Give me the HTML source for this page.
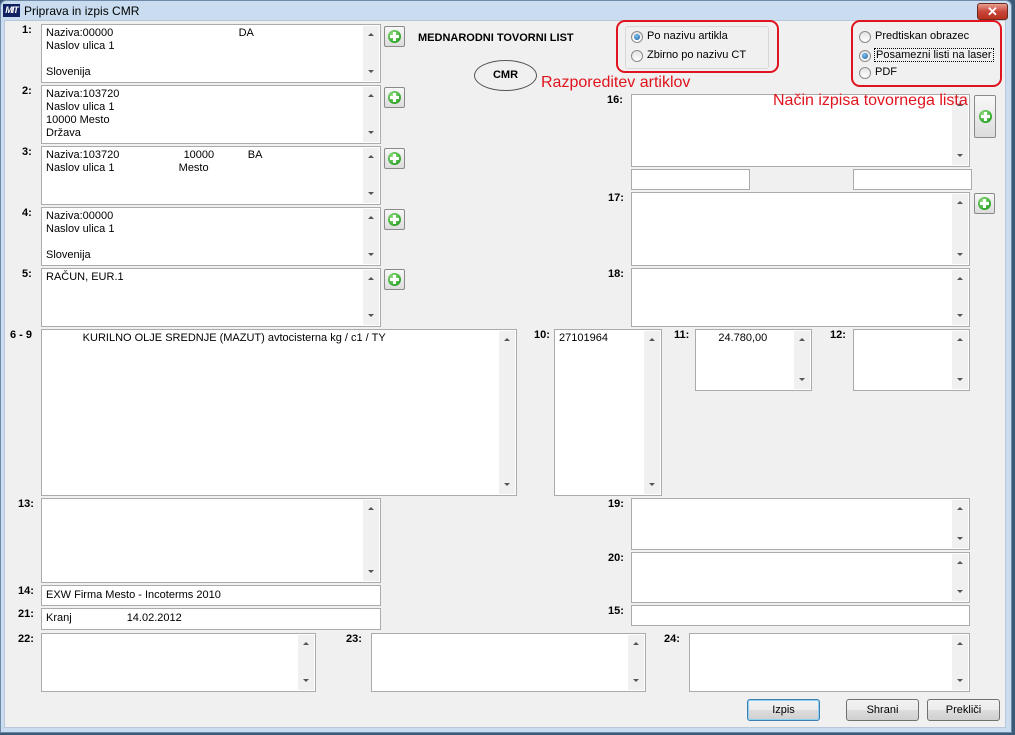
<!DOCTYPE html>
<html><head><meta charset="utf-8"><style>
*{margin:0;padding:0;box-sizing:border-box}
body{width:1015px;height:735px;overflow:hidden;background:#3a5a78;font-family:"Liberation Sans",sans-serif;font-size:11px;color:#000;position:relative}
.win{position:absolute;left:0;top:0;width:1012px;height:733px;background:#c9dcf0;border:1px solid #6e8aa8;border-radius:6px 6px 0 0}
.client{position:absolute;left:4px;top:20px;width:1002px;height:708px;background:#f0f0f0;border:1px solid #b8c8da}
.title{position:absolute;left:24px;top:4px;font-size:12px;color:#000}
.logo{position:absolute;left:3px;top:4px;width:17px;height:13px;background:#102060;color:#fff;font-size:9px;font-weight:bold;font-style:italic;line-height:13px;text-align:center;letter-spacing:-1px}
.close{position:absolute;left:977px;top:3px;width:31px;height:17px;border:1px solid #6b2a20;border-radius:3px;background:linear-gradient(#e8a090,#c8463a 50%,#b8301f);color:#fff;font-weight:bold;font-size:13px;text-align:center;line-height:15px}
.a{position:absolute}
.box{position:absolute;background:#fff;border:1px solid #ababab;overflow:hidden;line-height:13px;padding:2px 4px;white-space:pre}
.sb{position:absolute;right:1px;top:1px;bottom:1px;width:16px;background:#f0f0f0}
.sb:before{content:"";position:absolute;left:5px;top:7px;border:3px solid transparent;border-bottom:3px solid #555;border-top:0}
.sb:after{content:"";position:absolute;left:5px;bottom:8px;border:3px solid transparent;border-top:3px solid #555;border-bottom:0}
.lbl{position:absolute;font-weight:bold;font-size:11px}
.plus{position:absolute;width:21px;height:21px;border:1px solid #8a8a8a;border-radius:2px;background:linear-gradient(#f8f8f8,#dcdcdc)}
.plus i{position:absolute;left:3px;top:3px;width:13px;height:13px;border-radius:50%;background:radial-gradient(circle at 40% 35%,#9fe58a,#2fa52a 70%,#1f7a1f)}
.plus i:before{content:"";position:absolute;left:5px;top:2px;width:3px;height:9px;background:#fff}
.plus i:after{content:"";position:absolute;left:2px;top:5px;width:9px;height:3px;background:#fff}
.red{position:absolute;border:2px solid #e0141e;border-radius:9px}
.grp{position:absolute;border:1px solid #d8d8d8;border-radius:3px}
.rad{position:absolute;width:12px;height:12px;border-radius:50%;border:1px solid #8a8a8a;background:linear-gradient(#e4e4e4,#fff)}
.rad.on:after{content:"";position:absolute;left:2px;top:2px;width:6px;height:6px;border-radius:50%;background:radial-gradient(circle at 40% 35%,#7ac0f0,#1c5a9c)}
.rt{position:absolute;font-size:11px}
.btn{position:absolute;width:73px;height:22px;border:1px solid #707070;border-radius:3px;background:linear-gradient(#f2f2f2,#ebebeb 50%,#dddddd 51%,#cfcfcf);text-align:center;line-height:20px;font-size:11px}
.rtxt{position:absolute;color:#e0141e;font-size:16px}
</style></head><body>
<div class="win"></div>
<div class="logo">MIT</div>
<div class="title">Priprava in izpis CMR</div>
<div class="close">✕</div>
<div class="client"></div>

<div class="lbl" style="left:22px;top:24px">1:</div>
<div class="box" style="left:41px;top:24px;width:340px;height:59px">Naziva:00000                                         DA
Naslov ulica 1

Slovenija<div class="sb"></div></div>
<div class="plus" style="left:384px;top:26px"><i></i></div>

<div class="lbl" style="left:22px;top:85px">2:</div>
<div class="box" style="left:41px;top:85px;width:340px;height:59px">Naziva:103720
Naslov ulica 1
10000 Mesto
Država<div class="sb"></div></div>
<div class="plus" style="left:384px;top:87px"><i></i></div>

<div class="lbl" style="left:22px;top:146px">3:</div>
<div class="box" style="left:41px;top:146px;width:340px;height:59px">Naziva:103720                     10000           BA
Naslov ulica 1                     Mesto<div class="sb"></div></div>
<div class="plus" style="left:384px;top:148px"><i></i></div>

<div class="lbl" style="left:22px;top:207px">4:</div>
<div class="box" style="left:41px;top:207px;width:340px;height:59px">Naziva:00000
Naslov ulica 1

Slovenija<div class="sb"></div></div>
<div class="plus" style="left:384px;top:209px"><i></i></div>

<div class="lbl" style="left:22px;top:268px">5:</div>
<div class="box" style="left:41px;top:268px;width:340px;height:59px">RAČUN, EUR.1<div class="sb"></div></div>
<div class="plus" style="left:384px;top:269px"><i></i></div>

<div class="lbl" style="left:10px;top:329px">6 - 9</div>
<div class="box" style="left:41px;top:329px;width:476px;height:167px">            KURILNO OLJE SREDNJE (MAZUT) avtocisterna kg / c1 / TY<div class="sb"></div></div>

<div class="lbl" style="left:534px;top:329px">10:</div>
<div class="box" style="left:554px;top:329px;width:108px;height:167px">27101964<div class="sb"></div></div>
<div class="lbl" style="left:674px;top:329px">11:</div>
<div class="box" style="left:695px;top:329px;width:117px;height:62px">      24.780,00<div class="sb"></div></div>
<div class="lbl" style="left:830px;top:329px">12:</div>
<div class="box" style="left:853px;top:329px;width:117px;height:62px"><div class="sb"></div></div>

<div class="lbl" style="left:18px;top:498px">13:</div>
<div class="box" style="left:41px;top:498px;width:340px;height:85px"><div class="sb"></div></div>
<div class="lbl" style="left:18px;top:585px">14:</div>
<div class="box" style="left:41px;top:585px;width:340px;height:21px;padding-top:3px">EXW Firma Mesto - Incoterms 2010</div>
<div class="lbl" style="left:18px;top:608px">21:</div>
<div class="box" style="left:41px;top:608px;width:340px;height:22px;padding-top:3px">Kranj                  14.02.2012</div>

<div class="lbl" style="left:18px;top:633px">22:</div>
<div class="box" style="left:41px;top:633px;width:275px;height:59px"><div class="sb"></div></div>
<div class="lbl" style="left:346px;top:633px">23:</div>
<div class="box" style="left:371px;top:633px;width:275px;height:59px"><div class="sb"></div></div>
<div class="lbl" style="left:664px;top:633px">24:</div>
<div class="box" style="left:689px;top:633px;width:281px;height:59px"><div class="sb"></div></div>

<div class="lbl" style="left:607px;top:94px">16:</div>
<div class="box" style="left:631px;top:94px;width:339px;height:73px"><div class="sb"></div></div>
<div class="plus" style="left:974px;top:95px;width:22px;height:43px"><i style="top:14px;left:4px"></i></div>
<div class="box" style="left:631px;top:169px;width:119px;height:21px"></div>
<div class="box" style="left:853px;top:169px;width:119px;height:21px"></div>
<div class="lbl" style="left:608px;top:192px">17:</div>
<div class="box" style="left:631px;top:192px;width:339px;height:74px"><div class="sb"></div></div>
<div class="plus" style="left:974px;top:193px"><i></i></div>
<div class="lbl" style="left:608px;top:268px">18:</div>
<div class="box" style="left:631px;top:268px;width:339px;height:59px"><div class="sb"></div></div>
<div class="lbl" style="left:608px;top:498px">19:</div>
<div class="box" style="left:631px;top:498px;width:339px;height:52px"><div class="sb"></div></div>
<div class="lbl" style="left:608px;top:552px">20:</div>
<div class="box" style="left:631px;top:552px;width:339px;height:51px"><div class="sb"></div></div>
<div class="lbl" style="left:608px;top:605px">15:</div>
<div class="box" style="left:631px;top:605px;width:339px;height:21px"></div>

<div class="a" style="left:418px;top:32px;font-weight:bold;font-size:11px">MEDNARODNI TOVORNI LIST</div>
<div class="a" style="left:474px;top:60px;width:63px;height:31px;border:1px solid #555;border-radius:50%;text-align:center;line-height:29px;font-weight:bold">CMR</div>

<div class="red" style="left:616px;top:20px;width:163px;height:53px"></div>
<div class="grp" style="left:625px;top:26px;width:144px;height:43px"></div>
<div class="rad on" style="left:631px;top:31px"></div><div class="rt" style="left:647px;top:30px">Po nazivu artikla</div>
<div class="rad" style="left:631px;top:50px"></div><div class="rt" style="left:647px;top:49px">Zbirno po nazivu CT</div>

<div class="red" style="left:851px;top:20px;width:151px;height:67px"></div>
<div class="rad" style="left:859px;top:31px"></div><div class="rt" style="left:875px;top:30px">Predtiskan obrazec</div>
<div class="rad on" style="left:859px;top:50px"></div><div class="rt" style="left:874px;top:48px;border:1px dotted #000;padding:0 1px">Posamezni listi na laser</div>
<div class="rad" style="left:859px;top:67px"></div><div class="rt" style="left:875px;top:66px">PDF</div>

<div class="rtxt" style="left:541px;top:74px">Razporeditev artiklov</div>
<div class="rtxt" style="left:773px;top:92px">Način izpisa tovornega lista</div>

<div class="btn" style="left:747px;top:699px;border-color:#3c7fb1;box-shadow:inset 0 0 0 1px #8fd0f5">Izpis</div>
<div class="btn" style="left:846px;top:699px">Shrani</div>
<div class="btn" style="left:927px;top:699px">Prekliči</div>
</body></html>
